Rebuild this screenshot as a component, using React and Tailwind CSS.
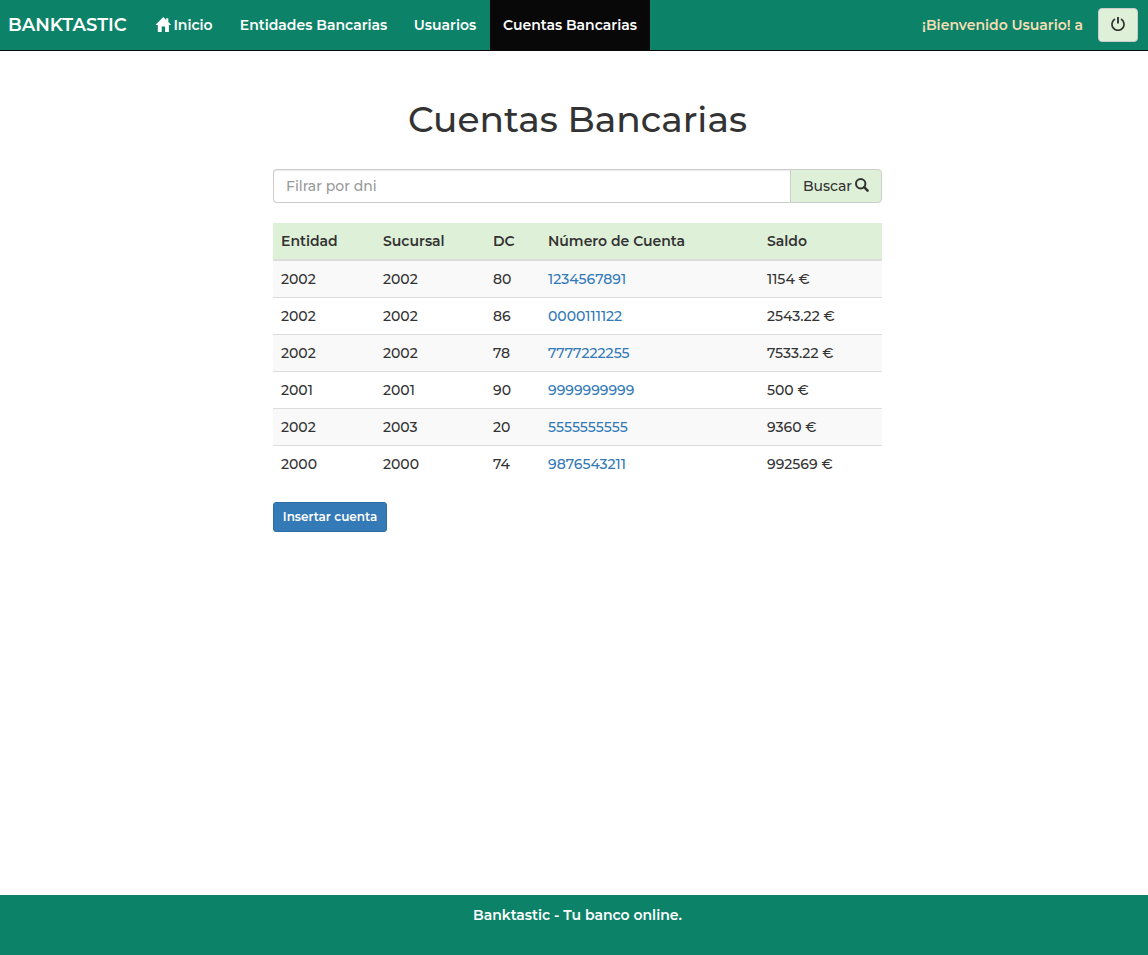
const NAV_ITEMS = [
  { label: "Inicio", width: "w-[86px]", icon: true },
  { label: "Entidades Bancarias", width: "w-[173px]" },
  { label: "Usuarios", width: "w-[90px]" },
  { label: "Cuentas Bancarias", width: "w-[160px]", active: true },
];

const COLUMNS = [
  { label: "Entidad", width: "w-[102px]" },
  { label: "Sucursal", width: "w-[110px]" },
  { label: "DC", width: "w-[55px]" },
  { label: "Número de Cuenta", width: "w-[219px]" },
  { label: "Saldo", width: "w-auto" },
];

const ACCOUNTS = [
  ["2002", "2002", "80", "1234567891", "1154 €"],
  ["2002", "2002", "86", "0000111122", "2543.22 €"],
  ["2002", "2002", "78", "7777222255", "7533.22 €"],
  ["2001", "2001", "90", "9999999999", "500 €"],
  ["2002", "2003", "20", "5555555555", "9360 €"],
  ["2000", "2000", "74", "9876543211", "992569 €"],
];

function HomeIcon() {
  return (
    <svg className="h-4 w-4 shrink-0" viewBox="0 0 16 16" fill="currentColor" aria-hidden="true">
      <path d="M8.3 0 L11.2 2.9 V1.2 H13.3 V5 L15.8 7.5 Q16 8.1 15.4 8.1 H13.9 V14.4 Q13.9 15 13.4 15 H10.1 V9.6 H6.7 V15 H3.3 Q2.8 15 2.8 14.5 V8.1 H1.3 Q0.6 8.1 0.9 7.5 Z" />
    </svg>
  );
}

function PowerIcon() {
  return (
    <svg className="h-[14px] w-[14px]" viewBox="0 0 14 14" fill="none" stroke="currentColor" aria-hidden="true">
      <path d="M4 2.1 A6 6 0 1 0 10 2.1" strokeWidth="1.7" />
      <path d="M7 0 V6.6" strokeWidth="1.9" />
    </svg>
  );
}

function SearchIcon() {
  return (
    <svg className="h-4 w-[14px] shrink-0" viewBox="0 0 14 16" fill="none" stroke="currentColor" aria-hidden="true">
      <circle cx="5.7" cy="5.7" r="4.7" strokeWidth="2" />
      <path d="M9.2 9.2 L12.6 12.6" strokeWidth="2.5" strokeLinecap="round" />
    </svg>
  );
}

export default function App() {
  return (
    <div className="flex min-h-screen flex-col bg-white font-['Montserrat','Inter',sans-serif] text-sm leading-5 text-[#333]">
      <header className="flex flex-wrap items-stretch border-b border-[#080808] bg-[#0c8269] font-semibold text-white">
        <a href="#" className="flex h-[50px] w-[141px] items-center pl-2 text-lg">
          BANKTASTIC
        </a>
        <nav className="flex flex-wrap">
          {NAV_ITEMS.map((item) => (
            <a
              key={item.label}
              href="#"
              aria-current={item.active ? "page" : undefined}
              className={`flex h-[50px] items-center justify-center gap-0.5 whitespace-nowrap ${item.width} ${item.active ? "bg-[#080808]" : ""}`}
            >
              {item.icon && <HomeIcon />}
              {item.label}
            </a>
          ))}
        </nav>
        <div className="ml-auto flex items-center gap-[15px] pr-[10px]">
          <span className="text-[#f5deb3]">¡Bienvenido Usuario! a</span>
          <button
            type="button"
            aria-label="Cerrar sesión"
            className="flex h-[34px] w-10 items-start justify-center rounded border border-[#ccc] bg-[#dff0d8] pt-2 text-[#333]"
          >
            <PowerIcon />
          </button>
        </div>
      </header>

      <main className="flex flex-1 flex-col items-center pl-[7px] pt-12">
        <h1 className="text-4xl leading-10 font-medium">Cuentas Bancarias</h1>
        <div className="mt-[30px] w-full max-w-[609px]">
          <form className="flex" onSubmit={(event) => event.preventDefault()}>
            <input
              type="text"
              aria-label="Filrar por dni"
              placeholder="Filrar por dni"
              className="h-[34px] min-w-0 flex-1 rounded-l border border-r-0 border-[#ccc] bg-white px-3 font-medium shadow-[inset_0_1px_1px_rgba(0,0,0,0.075)] outline-none placeholder:text-[#999]"
            />
            <button
              type="submit"
              className="flex h-[34px] w-[92px] items-center justify-center gap-[3px] rounded-r border border-[#ccc] bg-[#dff0d8] font-medium"
            >
              Buscar <SearchIcon />
            </button>
          </form>

          <table className="mt-5 w-full table-fixed border-separate border-spacing-0 text-left">
            <thead>
              <tr className="bg-[#dff0d8]">
                {COLUMNS.map((column) => (
                  <th key={column.label} scope="col" className={`border-b-2 border-[#ddd] p-2 font-semibold ${column.width}`}>
                    {column.label}
                  </th>
                ))}
              </tr>
            </thead>
            <tbody className="font-medium">
              {ACCOUNTS.map((account) => (
                <tr key={account[3]} className="group odd:bg-[#f9f9f9]">
                  {account.map((value, index) => (
                    <td key={index} className="border-t border-[#ddd] p-2 group-first:border-t-0">
                      {index === 3 ? (
                        <a href="#" className="text-[#337ab7]">{value}</a>
                      ) : (
                        value
                      )}
                    </td>
                  ))}
                </tr>
              ))}
            </tbody>
          </table>

          <button
            type="button"
            className="mt-5 h-[30px] w-[114px] rounded-[3px] border border-[#2e6da4] bg-[#337ab7] text-xs font-semibold whitespace-nowrap text-white"
          >
            Insertar cuenta
          </button>
        </div>
      </main>

      <footer className="h-[60px] bg-[#0c8269] pt-[10px] pl-[7px] text-center font-semibold text-white">
        Banktastic - Tu banco online.
      </footer>
    </div>
  );
}
